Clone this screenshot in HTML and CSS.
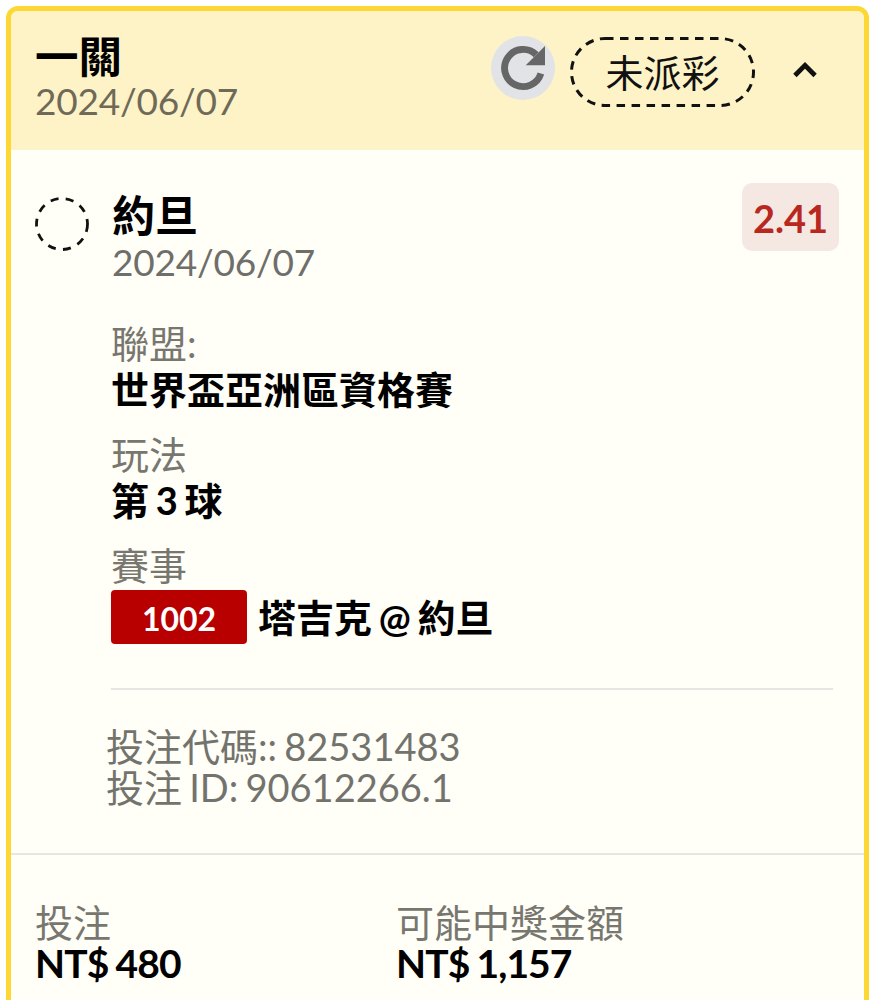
FILE: index.html
```html
<!DOCTYPE html>
<html lang="zh-Hant">
<head>
    <meta charset="UTF-8">
    <meta name="viewport" content="width=device-width, initial-scale=1.0">
    <title>一關</title>
    <link rel="stylesheet" href="styles.css">
</head>
<body>
    <div class="card">
        <header class="card-head">
            <div class="head-title">
                <div class="title">一關</div>
                <div class="date">2024/06/07</div>
            </div>
            <div class="head-actions">
                <button class="refresh-btn">
                    <svg viewBox="0 0 24 24" width="66" height="66"><path fill="none" stroke="#666" stroke-width="2.5" d="M16.8 7.2A6.75 6.75 0 1 0 18.5 14"/><path fill="#666" d="M13 11h7V4z"/></svg>
                </button>
                <span class="status-pill">
                    <svg class="pill-border" viewBox="0 0 185 70" width="185" height="70"><rect x="1.5" y="1.5" width="182" height="67" rx="33.5" fill="none" stroke="#111" stroke-width="3" stroke-dasharray="8.5 6.5"/></svg>
                    未派彩
                </span>
                <svg class="chevron" viewBox="0 0 24 24" width="44" height="44"><path fill="none" stroke="#111" stroke-width="2.6" d="M6.5 15 12 9.5l5.5 5.5"/></svg>
            </div>
        </header>

        <section class="selection">
            <div class="selection-top">
                <svg class="status-dot" viewBox="0 0 56 56" width="56" height="56"><circle cx="28" cy="28" r="25.5" fill="none" stroke="#111" stroke-width="2.8" stroke-dasharray="8 7.4"/></svg>
                <div class="selection-name">
                    <div class="team">約旦</div>
                    <div class="date date-grey">2024/06/07</div>
                </div>
                <div class="odds">2.41</div>
            </div>

            <div class="detail">
                <div class="label">聯盟:</div>
                <div class="value">世界盃亞洲區資格賽</div>
            </div>
            <div class="detail">
                <div class="label">玩法</div>
                <div class="value">第 3 球</div>
            </div>
            <div class="detail">
                <div class="label">賽事</div>
                <div class="match">
                    <span class="match-no">1002</span>
                    <span class="value">塔吉克 @ 約旦</span>
                </div>
            </div>

            <hr class="divider">

            <div class="codes">
                <div>投注代碼:: 82531483</div>
                <div>投注 ID: 90612266.1</div>
            </div>
        </section>

        <section class="totals">
            <div class="total">
                <div class="label">投注</div>
                <div class="amount">NT$ 480</div>
            </div>
            <div class="total">
                <div class="label">可能中獎金額</div>
                <div class="amount">NT$ 1,157</div>
            </div>
        </section>
    </div>
</body>
</html>
```

FILE: styles.css
```css
html, body {
    height: 1000px;
    overflow: hidden;
}

body {
    font-family: Lato, "Noto Sans CJK TC", sans-serif;
    background-color: #fff;
    color: #000;
    margin: 0;
    padding: 6px 8px 0 6px;
}

.card {
    border: 5px solid #fdd835;
    border-radius: 12px;
    background-color: #fffef7;
    height: 1040px;
    overflow: hidden;
}

/* Header */
.card-head {
    background-color: #fef3c7;
    height: 139px;
    display: flex;
    justify-content: space-between;
    align-items: flex-start;
    padding: 22px 37px 0 24px;
    box-sizing: border-box;
}

.title {
    font-size: 43.5px;
    font-weight: 700;
    line-height: 47px;
}

.date {
    font-size: 37px;
    letter-spacing: -0.2px;
    line-height: 42px;
    color: #6f6a58;
}

.date-grey {
    color: #6e6e6a;
}

.head-actions {
    display: flex;
    align-items: flex-start;
}

.refresh-btn {
    width: 64px;
    height: 64px;
    margin-top: 3px;
    border: none;
    border-radius: 50%;
    background-color: #e1e3e6;
    padding: 0;
    display: flex;
    align-items: center;
    justify-content: center;
}

.refresh-btn svg {
    flex-shrink: 0;
}

.status-pill {
    position: relative;
    margin: 4px 0 0 15px;
    width: 185px;
    height: 70px;
    font-size: 38px;
    line-height: 70px;
    color: #111;
    text-align: center;
}

.pill-border {
    position: absolute;
    top: 0;
    left: 0;
}

.chevron {
    margin: 15px 0 0 28px;
}

/* Selection */
.selection {
    padding: 33px 31px 0 24px;
    height: 705px;
    box-sizing: border-box;
    border-bottom: 2px solid #e6e6e2;
}

.selection-top {
    display: flex;
    align-items: flex-start;
}

.status-dot {
    margin: 13px 0 0 -1px;
}

.selection-name {
    margin: 8px 0 0 22px;
    flex: 1;
}

.team {
    font-size: 43px;
    font-weight: 700;
    line-height: 50px;
}

.odds {
    background-color: #f5e7e2;
    color: #b9281f;
    font-size: 38px;
    font-weight: 700;
    width: 97px;
    height: 68px;
    line-height: 70px;
    text-align: center;
    border-radius: 10px;
    margin-right: -6px;
}

.detail {
    margin: 0 0 0 76px;
}

.selection-top + .detail {
    margin-top: 39px;
}

.detail + .detail {
    margin-top: 21px;
}

.label {
    font-size: 38px;
    line-height: 42px;
    color: #77776f;
}

.value {
    font-size: 38px;
    font-weight: 700;
    line-height: 46px;
    word-spacing: -2.5px;
}

.label + .value {
    margin-top: 2px;
}

.match {
    display: flex;
    align-items: center;
    gap: 11px;
    margin-top: 4px;
}

.match-no {
    width: 136px;
    height: 54px;
    background-color: #b80000;
    color: #fff;
    font-size: 32px;
    font-weight: 700;
    line-height: 58px;
    text-align: center;
    border-radius: 4px;
}

.divider {
    margin: 44px 0 0 76px;
    height: 2px;
    border: none;
    background-color: #e6e6e2;
}

.codes {
    margin: 36px 0 0 71px;
    font-size: 38px;
    line-height: 41px;
    word-spacing: -2.5px;
    color: #73736d;
}

/* Totals */
.totals {
    display: grid;
    grid-template-columns: 361px 1fr;
    padding: 46px 24px 0;
}

.amount {
    margin-top: 1px;
    font-size: 39px;
    letter-spacing: -0.9px;
    word-spacing: -1.5px;
    font-weight: 700;
    line-height: 38px;
}
```
